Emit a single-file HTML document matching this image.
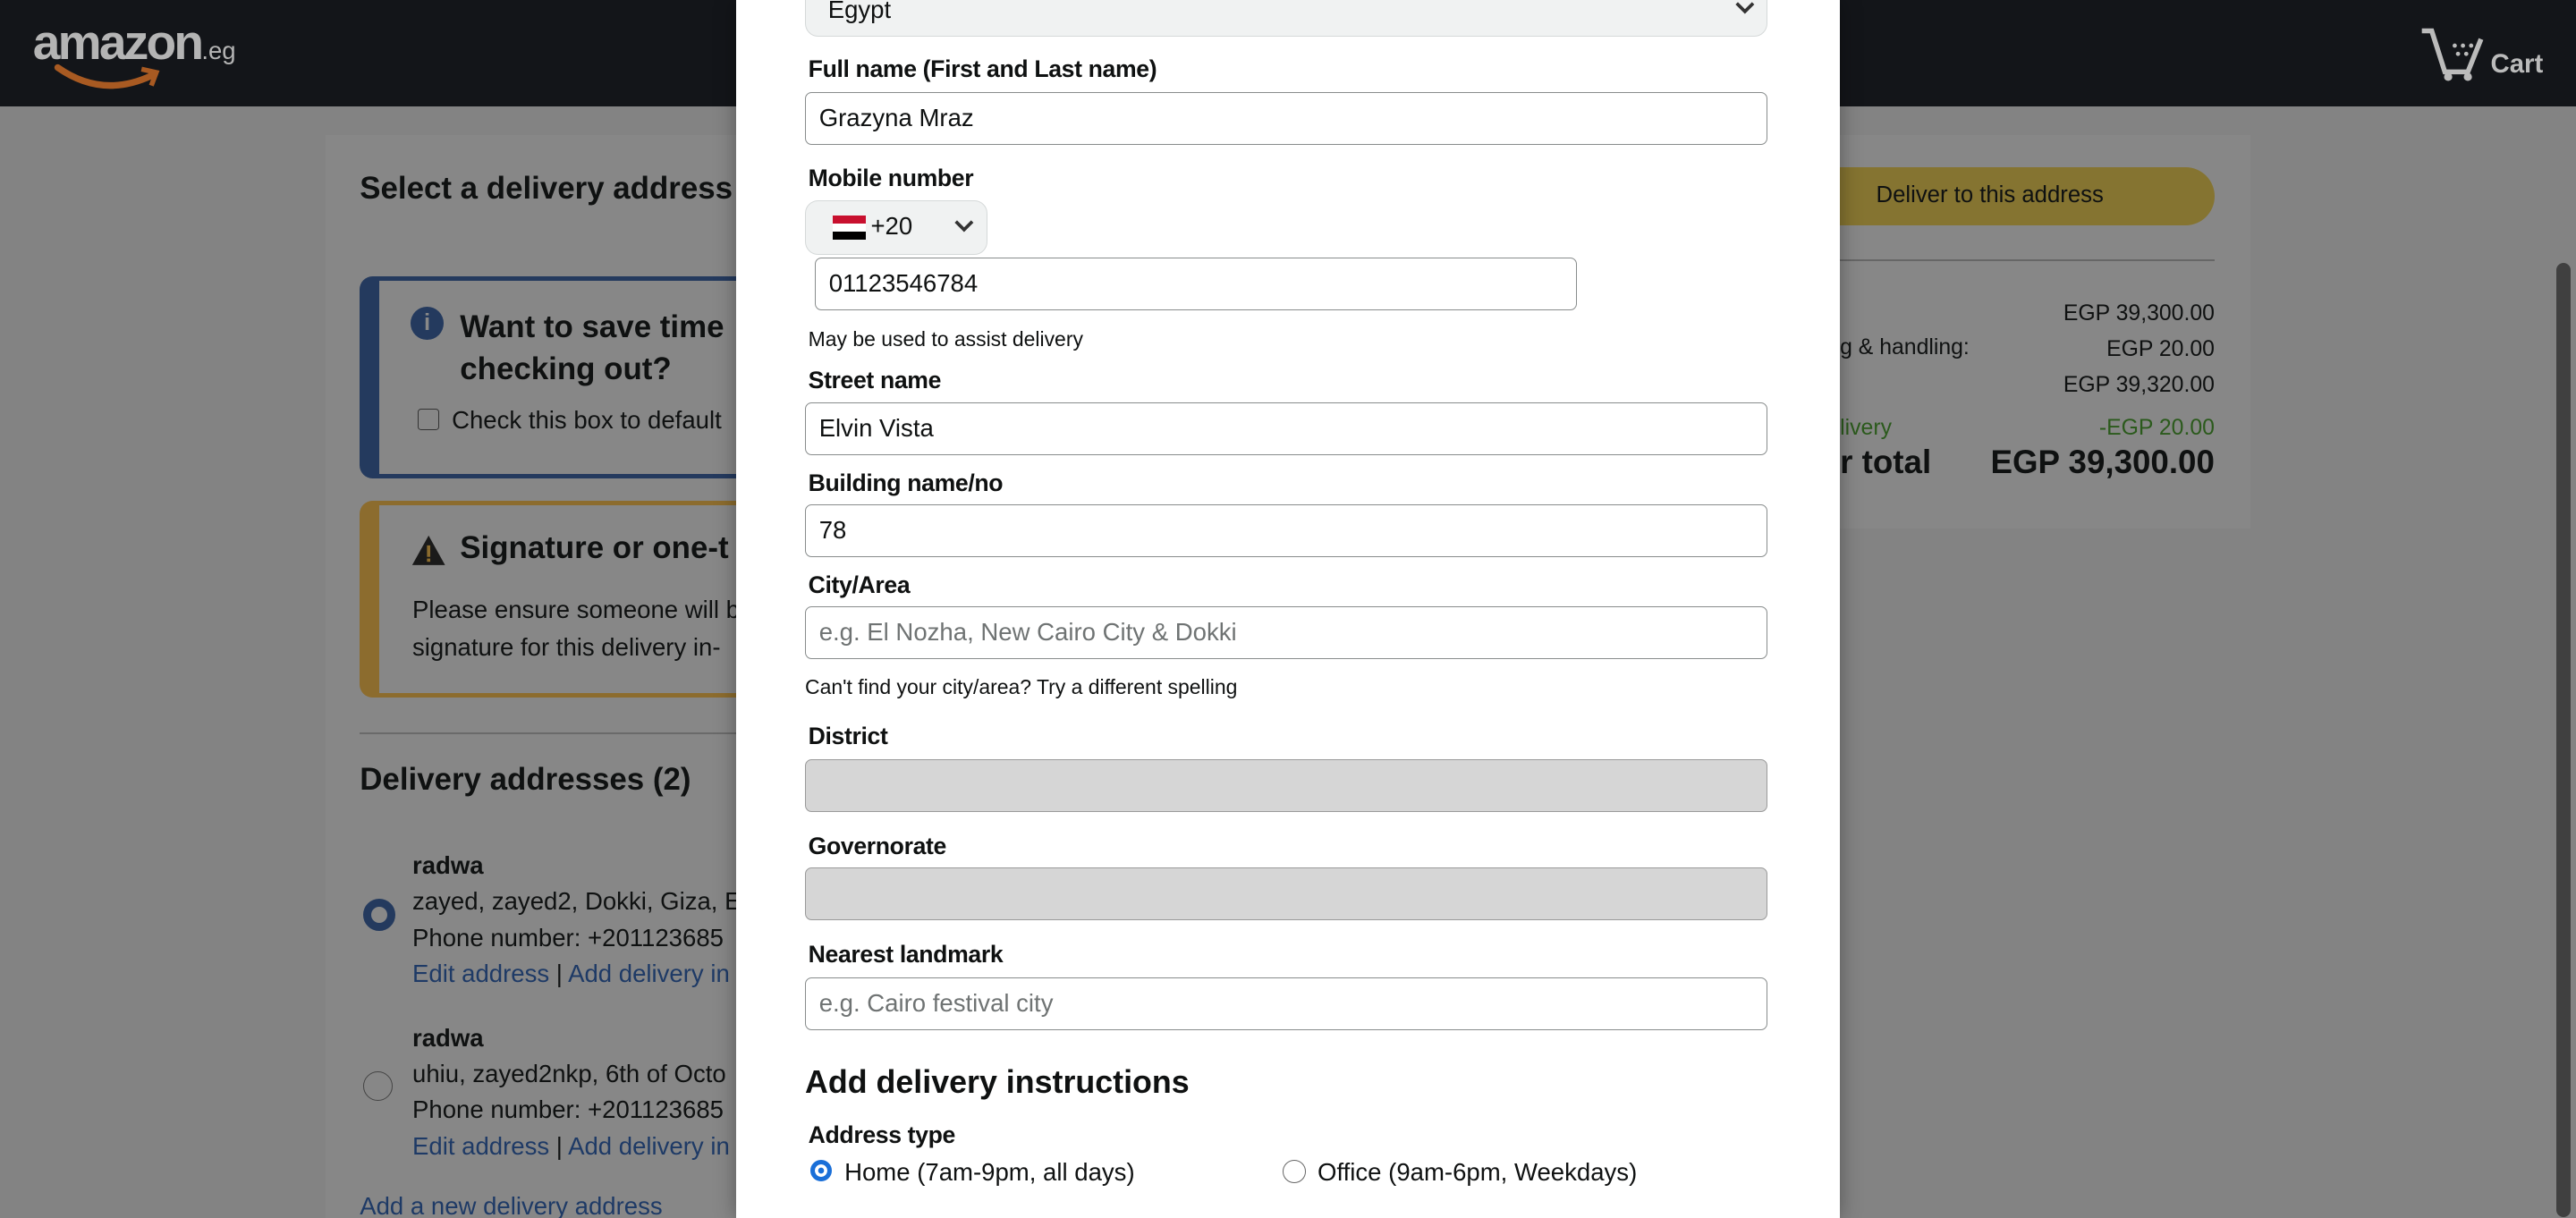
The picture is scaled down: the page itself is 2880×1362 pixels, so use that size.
<!DOCTYPE html>
<html style="height:1362px;overflow:hidden;"><head><meta charset="utf-8"><style>
html,body{margin:0;padding:0;}
body{width:1568px;height:741px;overflow:hidden;zoom:1.836735;background:#838383;font-family:"Liberation Sans",sans-serif;color:#0f1111;position:relative;}
.a{position:absolute;white-space:nowrap;}
.hdr{position:absolute;left:0;top:0;width:1568px;height:65px;background:#131519;}
.panel{position:absolute;left:198px;top:82px;width:1172px;height:240px;background:#878787;}
.lbl{position:absolute;left:492px;font-size:14.5px;font-weight:bold;color:#0f1111;letter-spacing:-0.2px;}
.inp{position:absolute;left:490px;width:577px;height:31px;border:1px solid #888c8c;border-radius:4px;background:#fff;font-size:15px;line-height:31px;padding-left:8px;box-sizing:content-box;}
.ph{color:#6f7373;}
.dis{background:#d6d6d6;border-color:#9a9a9a;}
.small{position:absolute;font-size:12.5px;color:#0f1111;}
.lnk{color:#1e3a66;}
</style></head><body>
<div class="hdr"></div>
<div class="a" style="left:20px;top:8px;font-size:30px;font-weight:bold;color:#b4b4b4;letter-spacing:-1.5px;">amazon<span style="font-size:15px;font-weight:normal;letter-spacing:0">.eg</span></div>
<svg class="a" style="left:32px;top:38px" width="70" height="20"><path d="M3 3 Q30 22 60 8" stroke="#a85a22" stroke-width="4" fill="none" stroke-linecap="round"/><path d="M54 4 L63 6 L60 14" stroke="#a85a22" stroke-width="3" fill="none"/></svg>
<svg class="a" style="left:1472px;top:16px" width="44" height="34"><path d="M2 3 H8 L16 28 H30 L38 8" stroke="#bbb" stroke-width="3" fill="none"/><circle cx="18" cy="31" r="2.5" fill="#bbb"/><circle cx="30" cy="31" r="2.5" fill="#bbb"/><circle cx="22" cy="12" r="1.3" fill="#bbb"/><circle cx="27" cy="12" r="1.3" fill="#bbb"/><circle cx="32" cy="12" r="1.3" fill="#bbb"/><circle cx="24" cy="17" r="1.3" fill="#bbb"/><circle cx="29" cy="17" r="1.3" fill="#bbb"/></svg>
<div class="a" style="left:1516px;top:30px;font-size:16px;font-weight:bold;color:#bbb;">Cart</div>

<div class="panel"></div>
<div class="a" style="left:198px;top:82px;width:922px;height:660px;background:#878787;"></div>
<div class="a" style="left:219px;top:104px;font-size:19px;font-weight:bold;">Select a delivery address</div>
<div class="a" style="left:219px;top:168px;width:400px;height:118px;border:3px solid #243a5e;border-left-width:12px;border-radius:8px;"></div>
<div class="a" style="left:250px;top:187px;width:20px;height:20px;border-radius:50%;background:#243a5e;color:#888;font-weight:bold;font-size:14px;text-align:center;line-height:20px;">i</div>
<div class="a" style="left:280px;top:186px;font-size:19px;font-weight:bold;line-height:26px;">Want to save time<br>checking out?</div>
<div class="a" style="left:254px;top:249px;width:12px;height:12px;border:1px solid #333;border-radius:2px;"></div>
<div class="a" style="left:275px;top:247px;font-size:15px;">Check this box to default</div>
<div class="a" style="left:219px;top:305px;width:400px;height:114px;border:3px solid #8c6c2e;border-left-width:12px;border-radius:8px;"></div>
<svg class="a" style="left:250px;top:325px" width="22" height="20"><path d="M11 1 L21 19 H1 Z" fill="#1a1a1a"/><rect x="10" y="7" width="2" height="7" fill="#8c6c2e"/><rect x="10" y="15" width="2" height="2" fill="#8c6c2e"/></svg>
<div class="a" style="left:280px;top:323px;font-size:19px;font-weight:bold;">Signature or one-t</div>
<div class="a" style="left:251px;top:360px;font-size:15px;line-height:23px;">Please ensure someone will b<br>signature for this delivery in-</div>
<div class="a" style="left:219px;top:446px;width:240px;height:1px;background:#6a6a6a;"></div>
<div class="a" style="left:219px;top:464px;font-size:19px;font-weight:bold;">Delivery addresses (2)</div>
<div class="a" style="left:221px;top:547px;width:10px;height:10px;border:5px solid #243a5e;border-radius:50%;background:#888;"></div>
<div class="a" style="left:251px;top:516px;font-size:15px;line-height:22px;"><b>radwa</b><br>zayed, zayed2, Dokki, Giza, E<br>Phone number: +201123685<br><span class="lnk">Edit address</span> | <span class="lnk">Add delivery in</span></div>
<div class="a" style="left:221px;top:652px;width:17px;height:17px;border:1px solid #444;border-radius:50%;"></div>
<div class="a" style="left:251px;top:621px;font-size:15px;line-height:22px;"><b>radwa</b><br>uhiu, zayed2nkp, 6th of Octo<br>Phone number: +201123685<br><span class="lnk">Edit address</span> | <span class="lnk">Add delivery in</span></div>
<div class="a lnk" style="left:219px;top:726px;font-size:15px;">Add a new delivery address</div>

<div class="a" style="left:1080px;top:102px;width:268px;height:35px;border-radius:18px;background:#857431;"></div>
<div class="a" style="left:1142px;top:111px;font-size:14px;">Deliver to this address</div>
<div class="a" style="left:1120px;top:158px;width:228px;height:1px;background:#666;"></div>
<div class="a" style="left:1120px;top:180px;width:228px;font-size:13.5px;line-height:22px;text-align:right;">EGP 39,300.00<br>EGP 20.00<br>EGP 39,320.00</div>
<div class="a" style="left:1120px;top:204px;font-size:13.5px;">g &amp; handling:</div>
<div class="a" style="left:1120px;top:253px;font-size:13.5px;color:#2b5a1c;">livery</div>
<div class="a" style="left:1200px;top:253px;width:148px;font-size:13.5px;text-align:right;color:#2b5a1c;">-EGP 20.00</div>
<div class="a" style="left:1120px;top:270px;font-size:20px;font-weight:bold;">r total</div>
<div class="a" style="left:1180px;top:270px;width:168px;font-size:20px;font-weight:bold;text-align:right;">EGP 39,300.00</div>

<div class="a" style="left:1556px;top:160px;width:9px;height:581px;border-radius:5px;background:#404040;"></div>

<!-- modal -->
<div class="a" style="left:448px;top:0;width:672px;height:742px;background:#fff;box-shadow:0 0 12px rgba(0,0,0,0.35);"></div>
<div class="a" style="left:490px;top:-12px;width:585px;height:33px;border:1px solid #d5d9d9;border-radius:8px;background:#f0f2f2;"></div>
<div class="a" style="left:504px;top:-3px;font-size:15px;">Egypt</div>
<svg class="a" style="left:1055px;top:0px" width="14" height="10"><path d="M2 2 L7 7 L12 2" stroke="#333" stroke-width="2" fill="none"/></svg>

<div class="lbl" style="top:34px;">Full name (First and Last name)</div>
<div class="inp" style="top:56px;">Grazyna Mraz</div>
<div class="lbl" style="top:100px;">Mobile number</div>
<div class="a" style="left:490px;top:122px;width:110px;height:32px;border:1px solid #d5d9d9;border-radius:8px;background:#f0f2f2;"></div>
<div class="a" style="left:507px;top:131px;width:20px;height:5px;background:#c8102e;"></div>
<div class="a" style="left:507px;top:136px;width:20px;height:5px;background:#fff;"></div>
<div class="a" style="left:507px;top:141px;width:20px;height:5px;background:#000;"></div>
<div class="a" style="left:530px;top:129px;font-size:15px;">+20</div>
<svg class="a" style="left:580px;top:133px" width="14" height="10"><path d="M2 2 L7 7 L12 2" stroke="#333" stroke-width="2" fill="none"/></svg>
<div class="inp" style="left:496px;top:157px;width:455px;">01123546784</div>
<div class="small" style="left:492px;top:199px;">May be used to assist delivery</div>
<div class="lbl" style="top:223px;">Street name</div>
<div class="inp" style="top:245px;">Elvin Vista</div>
<div class="lbl" style="top:286px;">Building name/no</div>
<div class="inp" style="top:307px;">78</div>
<div class="lbl" style="top:348px;">City/Area</div>
<div class="inp ph" style="top:369px;">e.g. El Nozha, New Cairo City &amp; Dokki</div>
<div class="small" style="left:490px;top:411px;">Can't find your city/area? Try a different spelling</div>
<div class="lbl" style="top:440px;">District</div>
<div class="inp dis" style="top:462px;"></div>
<div class="lbl" style="top:507px;">Governorate</div>
<div class="inp dis" style="top:528px;"></div>
<div class="lbl" style="top:573px;">Nearest landmark</div>
<div class="inp ph" style="top:595px;">e.g. Cairo festival city</div>
<div class="a" style="left:490px;top:648px;font-size:19.5px;font-weight:bold;">Add delivery instructions</div>
<div class="lbl" style="top:683px;">Address type</div>
<div class="a" style="left:493px;top:706px;width:8px;height:8px;border:3px solid #1a6fd8;border-radius:50%;box-shadow:inset 0 0 0 2px #fff;background:#1a6fd8;"></div>
<div class="a" style="left:514px;top:705px;font-size:15px;">Home (7am-9pm, all days)</div>
<div class="a" style="left:781px;top:706px;width:13px;height:13px;border:1px solid #666;border-radius:50%;"></div>
<div class="a" style="left:802px;top:705px;font-size:15px;">Office (9am-6pm, Weekdays)</div>
</body></html>
